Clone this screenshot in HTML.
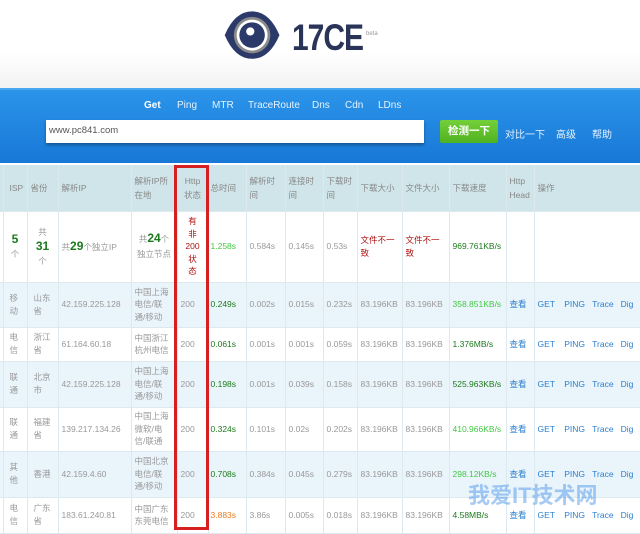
<!DOCTYPE html>
<html><head><meta charset="utf-8"><style>
*{margin:0;padding:0;box-sizing:border-box}
body{width:640px;height:527px;overflow:hidden;background:#fff;font-family:"Liberation Sans","Noto Sans CJK SC",sans-serif;position:relative;font-size:8.5px;color:#999}
.top{position:absolute;left:0;top:0;width:640px;height:88px;background:linear-gradient(#fff 60%,#f2f2f2)}
.band{position:absolute;left:0;top:88px;width:640px;height:75px;background:linear-gradient(#2b94ea,#1878d6);border-top:2px solid #4aa6f0}
.nav{position:absolute;top:100px;color:#e6f2ff;font-size:10px}
.inp{position:absolute;left:46px;top:120px;width:378px;height:23px;background:#fff;box-shadow:0 2px 3px rgba(0,0,0,.35);font-size:9.5px;color:#555;padding:5px 3px}
.btn{position:absolute;left:440px;top:120px;width:58px;height:23px;background:linear-gradient(#74d03a,#4fb21f);color:#fff;font-size:10.5px;font-weight:bold;text-align:center;line-height:23px;border-radius:2px}
.lk{position:absolute;top:126px;color:#e6f2ff;font-size:10px}
table{position:absolute;left:0;top:165px;border-collapse:collapse;table-layout:fixed;width:640px}
td{border-right:1px solid #dce9ee;border-bottom:1px solid #dce9ee;padding:0 3px;vertical-align:middle;line-height:12.5px;overflow:hidden;white-space:nowrap}
tr.h td{background:#cfe5e9;height:46px;color:#888;line-height:14px;white-space:normal}
tr.b td{background:#eaf4fb}
.g{color:#1b7a1b}.lg{color:#43c843}.r{color:#b01010}.o{color:#e87c22}.bl{color:#2a7fd0}
.red{position:absolute;left:174px;top:165px;width:35px;height:365px;border:3px solid #d42020}
.w{white-space:normal}
td.c{padding:0 0 0 6px;line-height:13px}
</style></head><body>
<div class="top"></div>
<svg style="position:absolute;left:222px;top:9px" width="62" height="54" viewBox="0 0 68 58">
<path d="M3 28 Q14 2 33 2 Q52 2 63 28 Q52 54 33 54 Q14 54 3 28Z" fill="#2c3a6a"/>
<circle cx="33" cy="28" r="20" fill="#8a8a8a"/><circle cx="33" cy="28" r="17" fill="#fff"/>
<circle cx="33" cy="28" r="14" fill="#2c3a6a"/><circle cx="31" cy="24" r="4.5" fill="#fff"/></svg>
<div style="position:absolute;left:292px;top:20px;font-size:30px;font-weight:bold;color:#2a3458;letter-spacing:-1px;transform:scaleY(1.25);transform-origin:0 0;line-height:30px">17CE</div>
<div style="position:absolute;left:366px;top:31px;font-size:6px;color:#999">beta</div>
<div class="band"></div>
<span class="nav" style="left:144px;font-weight:bold;color:#fff">Get</span>
<span class="nav" style="left:177px">Ping</span>
<span class="nav" style="left:212px">MTR</span>
<span class="nav" style="left:248px">TraceRoute</span>
<span class="nav" style="left:312px">Dns</span>
<span class="nav" style="left:345px">Cdn</span>
<span class="nav" style="left:378px">LDns</span>
<div class="inp">www.pc841.com</div>
<div class="btn">检测一下</div>
<span class="lk" style="left:505px">对比一下</span>
<span class="lk" style="left:556px">高级</span>
<span class="lk" style="left:592px">帮助</span>
<table>
<colgroup><col style="width:3px"><col style="width:24px"><col style="width:31px"><col style="width:73px"><col style="width:46px"><col style="width:31px"><col style="width:38px"><col style="width:39px"><col style="width:38px"><col style="width:34px"><col style="width:45px"><col style="width:47px"><col style="width:57px"><col style="width:28px"><col style="width:106px"></colgroup>
<tr class="h"><td style="padding:0"></td><td style="padding:0 0 0 6px">ISP</td><td>省份</td><td>解析IP</td><td>解析IP所<br>在地</td><td style="text-align:center">Http<br>状态</td><td style="padding:0 2px">总时间</td><td>解析时<br>间</td><td>连接时<br>间</td><td>下载时<br>间</td><td>下载大小</td><td>文件大小</td><td>下载速度</td><td>Http Head</td><td>操作</td></tr>
<tr style="height:71px"><td style="padding:0"></td><td class="w" style="text-align:center;line-height:14px"><span class="g" style="font-size:12px;font-weight:bold">5</span><br>个</td><td class="w" style="text-align:center;line-height:14px">共<br><span class="g" style="font-size:12px;font-weight:bold">31</span><br>个</td><td>共<span class="g" style="font-size:12px;font-weight:bold">29</span>个独立IP</td><td class="w" style="text-align:center;line-height:15px">共<span class="g" style="font-size:12px;font-weight:bold">24</span>个<br>独立节点</td><td class="w r" style="text-align:center;line-height:12.5px">有<br>非<br>200<br>状<br>态</td><td class="lg" style="padding:0 2px">1.258s</td><td>0.584s</td><td>0.145s</td><td>0.53s</td><td class="r w">文件不一<br>致</td><td class="r w">文件不一<br>致</td><td class="g">969.761KB/s</td><td></td><td></td></tr>
<tr class="b" style="height:45px"><td style="padding:0"></td><td class="c">移<br>动</td><td class="c">山东<br>省</td><td>42.159.225.128</td><td>中国上海<br>电信/联<br>通/移动</td><td>200</td><td class="g" style="padding:0 2px">0.249s</td><td>0.002s</td><td>0.015s</td><td>0.232s</td><td>83.196KB</td><td>83.196KB</td><td class="lg">358.851KB/s</td><td class="bl">查看</td><td class="bl">GET &nbsp;&nbsp; PING &nbsp;&nbsp;Trace &nbsp;&nbsp;Dig</td></tr>
<tr style="height:34px"><td style="padding:0"></td><td class="c">电<br>信</td><td class="c">浙江<br>省</td><td>61.164.60.18</td><td>中国浙江<br>杭州电信</td><td>200</td><td class="g" style="padding:0 2px">0.061s</td><td>0.001s</td><td>0.001s</td><td>0.059s</td><td>83.196KB</td><td>83.196KB</td><td class="g">1.376MB/s</td><td class="bl">查看</td><td class="bl">GET &nbsp;&nbsp; PING &nbsp;&nbsp;Trace &nbsp;&nbsp;Dig</td></tr>
<tr class="b" style="height:46px"><td style="padding:0"></td><td class="c">联<br>通</td><td class="c">北京<br>市</td><td>42.159.225.128</td><td>中国上海<br>电信/联<br>通/移动</td><td>200</td><td class="g" style="padding:0 2px">0.198s</td><td>0.001s</td><td>0.039s</td><td>0.158s</td><td>83.196KB</td><td>83.196KB</td><td class="g">525.963KB/s</td><td class="bl">查看</td><td class="bl">GET &nbsp;&nbsp; PING &nbsp;&nbsp;Trace &nbsp;&nbsp;Dig</td></tr>
<tr style="height:44px"><td style="padding:0"></td><td class="c">联<br>通</td><td class="c">福建<br>省</td><td>139.217.134.26</td><td>中国上海<br>微软/电<br>信/联通</td><td>200</td><td class="g" style="padding:0 2px">0.324s</td><td>0.101s</td><td>0.02s</td><td>0.202s</td><td>83.196KB</td><td>83.196KB</td><td class="lg">410.966KB/s</td><td class="bl">查看</td><td class="bl">GET &nbsp;&nbsp; PING &nbsp;&nbsp;Trace &nbsp;&nbsp;Dig</td></tr>
<tr class="b" style="height:46px"><td style="padding:0"></td><td class="c">其<br>他</td><td class="c">香港</td><td>42.159.4.60</td><td>中国北京<br>电信/联<br>通/移动</td><td>200</td><td class="g" style="padding:0 2px">0.708s</td><td>0.384s</td><td>0.045s</td><td>0.279s</td><td>83.196KB</td><td>83.196KB</td><td class="lg">298.12KB/s</td><td class="bl">查看</td><td class="bl">GET &nbsp;&nbsp; PING &nbsp;&nbsp;Trace &nbsp;&nbsp;Dig</td></tr>
<tr style="height:36px"><td style="padding:0"></td><td class="c">电<br>信</td><td class="c">广东<br>省</td><td>183.61.240.81</td><td>中国广东<br>东莞电信</td><td>200</td><td class="o" style="padding:0 2px">3.883s</td><td>3.86s</td><td>0.005s</td><td>0.018s</td><td>83.196KB</td><td>83.196KB</td><td class="g">4.58MB/s</td><td class="bl">查看</td><td class="bl">GET &nbsp;&nbsp; PING &nbsp;&nbsp;Trace &nbsp;&nbsp;Dig</td></tr>
</table>
<div class="red"></div>
<div style="position:absolute;left:468px;top:478px;font-size:22px;font-weight:bold;color:rgba(60,140,230,.45)">我爱IT技术网</div>
</body></html>
